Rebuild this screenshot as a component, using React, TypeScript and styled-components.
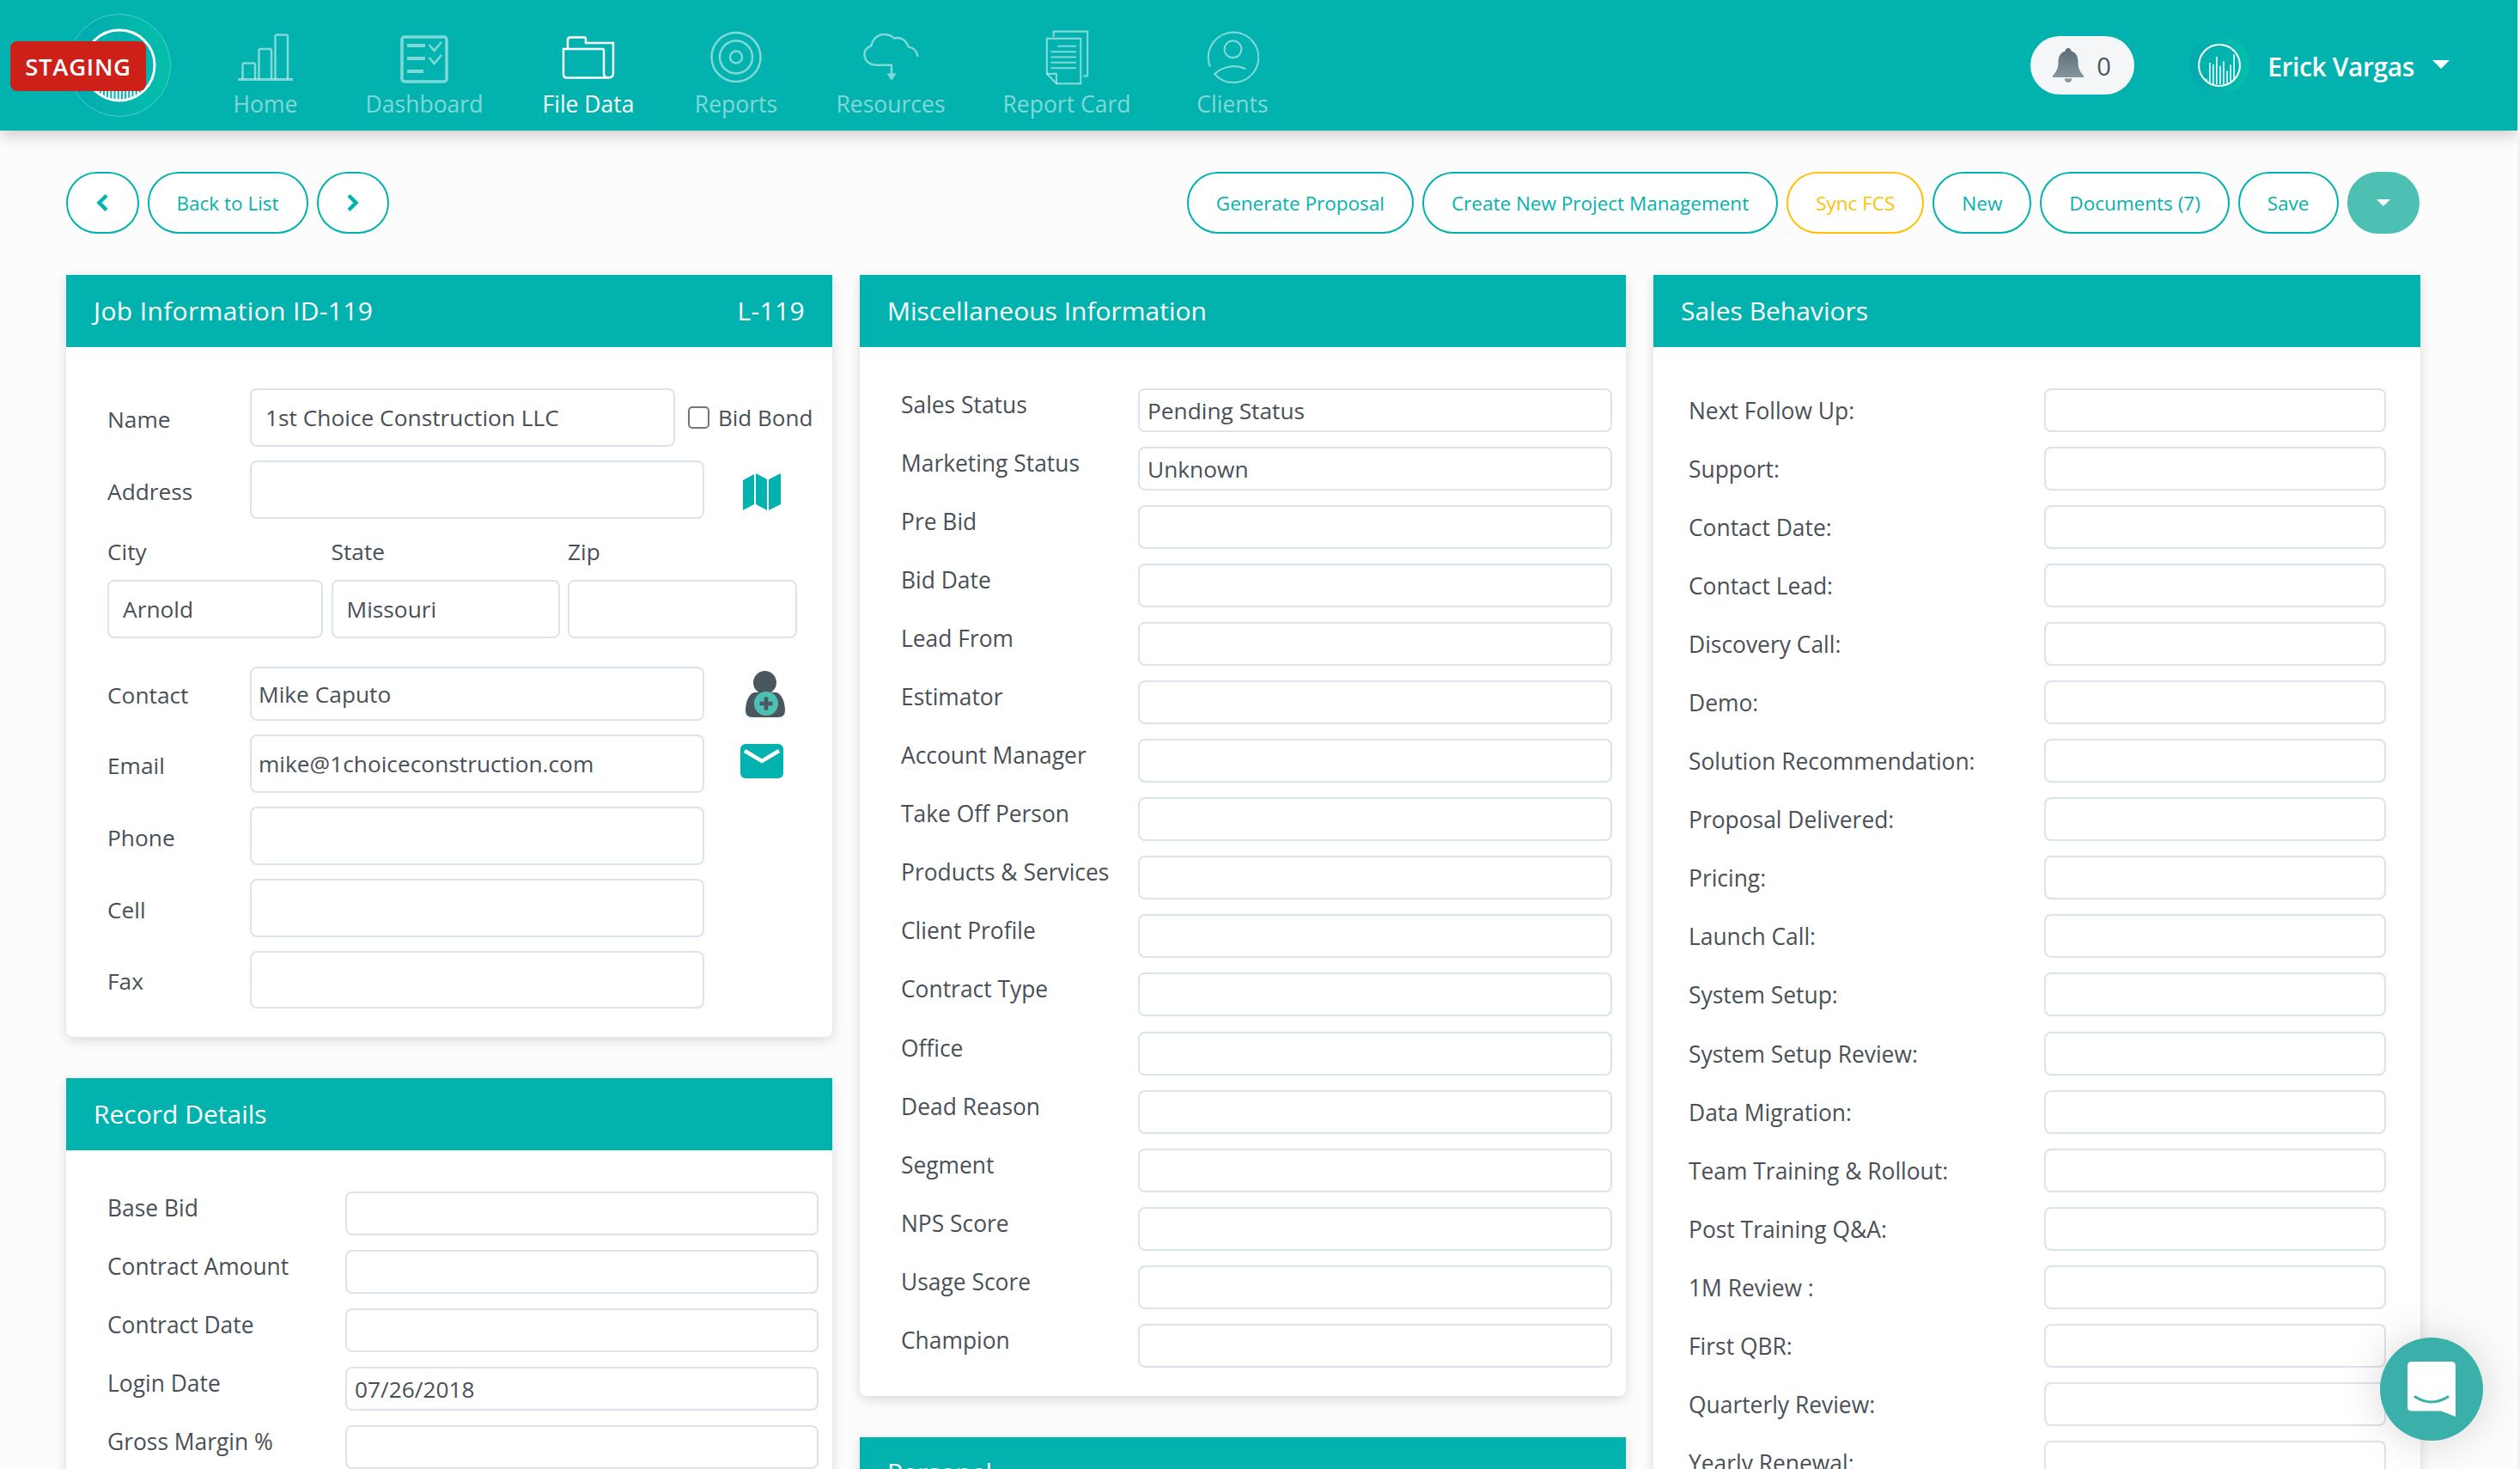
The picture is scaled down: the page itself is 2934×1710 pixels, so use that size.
import React from "react";
import styled, { createGlobalStyle } from "styled-components";

const TEAL = "#02b2af";
const FONT = `"Open Sans", "Noto Sans", sans-serif`;

const Global = createGlobalStyle`
  html, body { margin: 0; padding: 0; height: 100%; overflow: hidden; background: #f3f3f3; }
  body { font-family: ${FONT}; color: #495057; }
  * { box-sizing: border-box; }
`;

const Page = styled.div`
  width: 2931px;
  height: 1710px;
  overflow: hidden;
  background: #fcfcfc;
`;

const Nav = styled.header`
  position: relative;
  z-index: 2;
  height: 152px;
  display: flex;
  align-items: flex-start;
  background: ${TEAL};
  box-shadow: 0 4px 18px rgba(0, 0, 0, 0.22);
`;

const Brand = styled.div`
  position: relative;
  flex: none;
  width: 120px;
  height: 120px;
  margin: 16px 0 0 79px;
`;

const StagingBadge = styled.div`
  position: absolute;
  left: -67px;
  top: 32px;
  width: 158px;
  height: 58px;
  display: flex;
  align-items: center;
  justify-content: center;
  border-radius: 8px;
  background: #cc2019;
  color: #fff;
  font-size: 27.5px;
  font-weight: 600;
  letter-spacing: 0.7px;
`;

const NavList = styled.nav`
  display: flex;
  margin-left: 37px;
  padding-top: 34px;
`;

const NavItem = styled.a<{ $active?: boolean; $w: number }>`
  flex: none;
  width: ${(p) => p.$w}px;
  display: flex;
  flex-direction: column;
  align-items: center;
  color: ${(p) => (p.$active ? "#fff" : "rgba(255,255,255,.5)")};
  font-size: 26.5px;
  line-height: 36px;
  font-weight: ${(p) => (p.$active ? 500 : 400)};
  white-space: nowrap;
`;

const NavIcon = styled.span`
  height: 65px;
  margin-bottom: 4px;
  display: flex;
  align-items: center;
  svg { display: block; }
`;

const NavRight = styled.div`
  margin-left: auto;
  height: 152px;
  display: flex;
  align-items: flex-start;
  padding: 42px 79px 0 0;
`;

const BellPill = styled.div`
  width: 121px;
  height: 68px;
  border-radius: 34px;
  background: #f5f6f8;
  display: flex;
  align-items: center;
  padding-left: 26px;
  gap: 15px;
  color: #4a5560;
  font-size: 29px;
`;

const Avatar = styled.div`
  margin: -1px 0 0 64px;
  width: 70px;
  height: 70px;
  flex: none;
`;

const UserName = styled.span`
  margin: 1px 0 0 21px;
  color: #fff;
  font-size: 30px;
  font-weight: 600;
  line-height: 70px;
  letter-spacing: -0.4px;
  white-space: nowrap;
`;

const UserCaret = styled.span`
  margin: 28px 0 0 21px;
  width: 0;
  height: 0;
  border-left: 10px solid transparent;
  border-right: 10px solid transparent;
  border-top: 10px solid #fff;
`;

const Main = styled.main`
  padding: 48px 0 0 77px;
`;

const Toolbar = styled.div`
  width: 2740px;
  display: flex;
  justify-content: space-between;
  margin-bottom: 48px;
`;

const ButtonGroup = styled.div`
  display: flex;
  gap: 10px;
`;

const PillButton = styled.button<{ $tone?: "teal" | "amber" | "solid"; $square?: boolean }>`
  height: 72px;
  padding: 0 ${(p) => (p.$square ? 0 : 32)}px;
  width: ${(p) => (p.$square ? "84.5px" : "auto")};
  display: flex;
  align-items: center;
  justify-content: center;
  border-radius: 36px;
  border: 2.5px solid ${(p) => (p.$tone === "amber" ? "#ffc107" : p.$tone === "solid" ? "#4dbfb3" : TEAL)};
  background: ${(p) => (p.$tone === "solid" ? "#4dbfb3" : "#fff")};
  color: ${(p) => (p.$tone === "amber" ? "#ffc107" : TEAL)};
  font-family: ${FONT};
  font-size: 22.5px;
  white-space: nowrap;
`;

const SmallCaret = styled.span`
  width: 0;
  height: 0;
  border-left: 8px solid transparent;
  border-right: 8px solid transparent;
  border-top: 8px solid #fff;
`;

const Columns = styled.div`
  display: grid;
  grid-template-columns: 892px 892px 893px;
  column-gap: 32px;
  align-items: start;
`;

const Column = styled.div`
  display: flex;
  flex-direction: column;
  gap: 48px;
`;

const Card = styled.section`
  background: #fff;
  border-radius: 0 0 8px 8px;
  box-shadow: 0 4px 14px rgba(0, 0, 0, 0.14);
`;

const CardHeader = styled.h2`
  margin: 0;
  height: 84px;
  padding: 0 32px 2px;
  display: flex;
  align-items: center;
  justify-content: space-between;
  background: ${TEAL};
  color: #fff;
  font-size: 30px;
  font-weight: 400;
`;

const HeaderId = styled.span`
  letter-spacing: 0.35px;
`;

const CardBody = styled.div<{ $pl: number; $pb: number }>`
  padding: 48px 0 ${(p) => p.$pb}px ${(p) => p.$pl}px;
`;

const JobStack = styled.div`
  display: flex;
  flex-direction: column;
  gap: 16px;
`;

const JobRow = styled.div`
  display: flex;
  align-items: center;
`;

const JobLabel = styled.label`
  flex: none;
  width: 166px;
  font-size: 26.3px;
  line-height: 36px;
  padding-top: 3px;
`;

const TextInput = styled.input<{ $w: number; $h: number; $pad?: number }>`
  flex: none;
  display: block;
  width: ${(p) => p.$w}px;
  height: ${(p) => p.$h}px;
  padding: 0 ${(p) => p.$pad ?? 8}px;
  border: 2px solid #dde3ea;
  border-radius: 8px;
  background: #fff;
  color: #495057;
  font-family: ${FONT};
  font-size: 26.3px;
  outline: none;
`;

const BidBond = styled.label`
  display: flex;
  align-items: center;
  gap: 10px;
  margin-left: 15px;
  font-size: 26px;
  white-space: nowrap;
`;

const BidBox = styled.span`
  width: 25px;
  height: 26px;
  border: 2px solid #767676;
  border-radius: 5px;
  background: #fff;
`;

const IconSlot = styled.span<{ $dy?: number }>`
  flex: none;
  width: 134px;
  margin-top: ${(p) => p.$dy ?? 0}px;
  display: flex;
  justify-content: center;
  svg { display: block; }
`;

const PlaceGrid = styled.div`
  display: grid;
  grid-template-columns: 251px 266px 267px;
  column-gap: 9.5px;
  row-gap: 15px;
  margin: 4px 0 17px;
`;

const PlaceLabel = styled.label`
  font-size: 26.3px;
  line-height: 36px;
`;

const FormList = styled.div`
  display: flex;
  flex-direction: column;
  gap: 17.06px;
`;

const FormRow = styled.div<{ $center?: boolean }>`
  display: flex;
  align-items: ${(p) => (p.$center ? "center" : "flex-start")};
`;

const FormLabel = styled.label<{ $w: number }>`
  flex: none;
  width: ${(p) => p.$w}px;
  padding-top: 1px;
  font-size: 26.4px;
  line-height: 36px;
  white-space: nowrap;
`;

const ChatButton = styled.div`
  position: fixed;
  right: 43px;
  bottom: 33px;
  z-index: 5;
  width: 120px;
  height: 120px;
  border-radius: 50%;
  background: #3bafa9;
  display: flex;
  align-items: center;
  justify-content: center;
  box-shadow: 0 0 50px rgba(0, 0, 0, 0.16);
`;

function Mark({ size, wave }: { size: number; wave?: boolean }) {
  const waveBars = [11, 43, 40, 55, 37, 46, 27, 39, 60];
  const stripes = Array.from({ length: 13 });
  const id = `m${size}`;
  return (
    <svg width={size} height={size} viewBox="0 0 120 120">
      <defs>
        <linearGradient id={`${id}g`} x1="0" x2="1">
          <stop offset="0" stopColor="#03a9b0" />
          <stop offset="1" stopColor="#03bfaa" />
        </linearGradient>
        <clipPath id={`${id}c`}>
          <circle cx="60" cy="60" r="40" />
        </clipPath>
      </defs>
      <circle cx="60" cy="60" r="59.5" fill={`url(#${id}g)`} stroke={wave ? "none" : "rgba(255,255,255,.3)"} strokeWidth="1" />
      <circle cx="60" cy="60" r="41" fill={TEAL} stroke="#fff" strokeWidth={wave ? 3.5 : 3} />
      <g clipPath={`url(#${id}c)`} fill="#fff">
        {wave
          ? waveBars.map((h, i) => <rect key={i} x={34 + i * 6.9 - 1.3} y={98 - h} width="2.6" height={h} />)
          : stripes.map((_, i) => <rect key={i} x={34.5 + i * 4.2} y="80" width="2.2" height="20" />)}
      </g>
    </svg>
  );
}

const ICON = "rgba(255,255,255,.5)";

const HomeIcon = () => (
  <svg width="64" height="55" viewBox="0 0 64 55" fill="none" stroke={ICON} strokeWidth="2.5">
    <path d="M0 53.5H64" strokeWidth="3" />
    <path d="M5.5 53V36.5Q5.5 34.5 7.5 34.5H18Q20 34.5 20 36.5V53" />
    <path d="M24.5 53V20Q24.5 18 26.5 18H37Q39 18 39 20V53" />
    <path d="M43.5 53V3.5Q43.5 1.5 45.5 1.5H56Q58 1.5 58 3.5V53" />
  </svg>
);
const DashboardIcon = () => (
  <svg width="56" height="61" viewBox="0 -5 56 61" fill="none" stroke={ICON} strokeWidth="3.5">
    <rect x="2" y="2" width="52" height="52" rx="3" />
    <path d="M8 12H29M8 27H29M8 42H27" strokeWidth="4" />
    <path d="M33.5 11L39.5 18L48 8M33.5 26L39.5 33L48 23" strokeWidth="2.5" />
  </svg>
);
const FolderIcon = () => (
  <svg width="62" height="50" viewBox="0 0 62 50" fill="none" stroke="#fff" strokeWidth="2.5">
    <path d="M2 15H47Q49 15 49 17V43Q49 48.5 54 48.5H6Q2 48.5 2 44.5Z" />
    <path d="M7 15V4.5Q7 1.5 10 1.5H26Q28 1.5 28 3.5V8H60V43Q60 48.5 54 48.5" />
  </svg>
);
const ReportsIcon = () => (
  <svg width="60" height="61" viewBox="0 0 60 61" fill="none" stroke={ICON} strokeWidth="2.5">
    <circle cx="30" cy="30.5" r="28.5" />
    <circle cx="30" cy="30.5" r="19" />
    <circle cx="30" cy="30.5" r="7" />
  </svg>
);
const CloudIcon = () => (
  <svg width="65" height="55" viewBox="12 115 197 168" fill="none" stroke={ICON} strokeWidth="7.5">
    <path d="M205 197C203 178 190 165 172 162C165 140 145 125 122 132C105 115 75 112 55 130C45 140 42 150 40 158C22 165 14 178 16 195C20 215 35 225 55 227H112V258" />
    <path d="M95 257H130L112 282Z" fill={ICON} stroke="none" />
  </svg>
);
const ReportCardIcon = () => (
  <svg width="51" height="64" viewBox="653 100 154 195" fill="none" stroke={ICON} strokeWidth="6.5">
    <path d="M682 125V105H802V263H787" />
    <path d="M658 130H778V290H692L658 255Z" />
    <path d="M658 255H692V290" />
    <path d="M696 157H762M672 177H762M672 196H762M672 215H762M672 235H762" />
  </svg>
);
const ClientsIcon = () => (
  <svg width="61" height="61" viewBox="1212 105 186 186" fill="none" stroke={ICON} strokeWidth="6.5">
    <path d="M1224 232A89 89 0 1 1 1240 258C1262 235 1310 220 1350 240" />
    <circle cx="1305" cy="170" r="30" />
  </svg>
);
const BellIcon = () => (
  <svg width="36" height="40" viewBox="0 0 36 40">
    <defs>
      <linearGradient id="bell" x1="0" x2="0" y1="0" y2="1">
        <stop offset="0" stopColor="#5d6b78" />
        <stop offset="1" stopColor="#8b9da3" />
      </linearGradient>
    </defs>
    <path
      fill="url(#bell)"
      d="M18 0C20 0 21.5 1.5 21.5 3.5C27 5 29.5 10 29.5 16C29.5 24 32 28 36 32V34H0V32C4 28 6.5 24 6.5 16C6.5 10 9 5 14.5 3.5C14.5 1.5 16 0 18 0ZM13.5 35.5H22.5C22 38.5 20 40 18 40C16 40 14 38.5 13.5 35.5Z"
    />
  </svg>
);
const MapIcon = () => (
  <svg width="44" height="43" viewBox="0 0 44 43" fill={TEAL}>
    <path d="M0 8L13 1V36L0 43Z" />
    <path d="M15 0L28 7V43L15 36Z" />
    <path d="M30 7L44 0V36L30 43Z" />
  </svg>
);
const PersonIcon = () => (
  <svg width="54" height="54" viewBox="0 0 54 54">
    <circle cx="30.5" cy="13.5" r="13.5" fill="#4a575e" />
    <path d="M18 25C11 27 8 38 8 46Q8 54 16 54H46Q54 54 54 46C54 38 51 27 44 25Z" fill="#4a575e" />
    <circle cx="32" cy="38" r="14" fill="#4dbfb3" />
    <path d="M32 30.5V45.5M24.5 38H39.5" stroke="#4a575e" strokeWidth="4.5" />
  </svg>
);
const MailIcon = () => (
  <svg width="50" height="40" viewBox="0 0 50 40">
    <rect width="50" height="40" rx="6" fill={TEAL} />
    <path d="M5 8L25 20L45 8" fill="none" stroke="#fff" strokeWidth="4.5" />
  </svg>
);
const ChevronIcon = ({ right }: { right?: boolean }) => (
  <svg width="15" height="22" viewBox="0 0 15 22" fill="none" stroke={TEAL} strokeWidth="4.5">
    <path d={right ? "M3 2.5L11.5 11L3 19.5" : "M12 2.5L3.5 11L12 19.5"} />
  </svg>
);
const ChatIcon = () => (
  <svg width="56" height="64" viewBox="0 0 56 64">
    <path d="M5 0H51Q56 0 56 5V64L39 57.5H5Q0 57.5 0 52.5V5Q0 0 5 0Z" fill="#fff" />
    <path d="M9 41Q28 53 47 41" fill="none" stroke="#3bafa9" strokeWidth="3" strokeLinecap="round" />
  </svg>
);

const NAV = [
  { label: "Home", w: 146, icon: <HomeIcon /> },
  { label: "Dashboard", w: 224, icon: <DashboardIcon /> },
  { label: "File Data", w: 158, icon: <FolderIcon />, active: true },
  { label: "Reports", w: 186, icon: <ReportsIcon /> },
  { label: "Resources", w: 174, icon: <CloudIcon /> },
  { label: "Report Card", w: 236, icon: <ReportCardIcon /> },
  { label: "Clients", w: 150, icon: <ClientsIcon /> },
];

const MISC: [string, string][] = [
  ["Sales Status", "Pending Status"],
  ["Marketing Status", "Unknown"],
  ["Pre Bid", ""],
  ["Bid Date", ""],
  ["Lead From", ""],
  ["Estimator", ""],
  ["Account Manager", ""],
  ["Take Off Person", ""],
  ["Products & Services", ""],
  ["Client Profile", ""],
  ["Contract Type", ""],
  ["Office", ""],
  ["Dead Reason", ""],
  ["Segment", ""],
  ["NPS Score", ""],
  ["Usage Score", ""],
  ["Champion", ""],
];

const SALES = [
  "Next Follow Up:",
  "Support:",
  "Contact Date:",
  "Contact Lead:",
  "Discovery Call:",
  "Demo:",
  "Solution Recommendation:",
  "Proposal Delivered:",
  "Pricing:",
  "Launch Call:",
  "System Setup:",
  "System Setup Review:",
  "Data Migration:",
  "Team Training & Rollout:",
  "Post Training Q&A:",
  "1M Review :",
  "First QBR:",
  "Quarterly Review:",
  "Yearly Renewal:",
];

const RECORD: [string, string][] = [
  ["Base Bid", ""],
  ["Contract Amount", ""],
  ["Contract Date", ""],
  ["Login Date", "07/26/2018"],
  ["Gross Margin %", ""],
];

export default function App() {
  return (
    <Page>
      <Global />
      <Nav>
        <Brand>
          <Mark size={120} />
          <StagingBadge>STAGING</StagingBadge>
        </Brand>
        <NavList>
          {NAV.map((n) => (
            <NavItem key={n.label} $active={n.active} $w={n.w}>
              <NavIcon>{n.icon}</NavIcon>
              {n.label}
            </NavItem>
          ))}
        </NavList>
        <NavRight>
          <BellPill>
            <BellIcon />0
          </BellPill>
          <Avatar>
            <Mark size={70} wave />
          </Avatar>
          <UserName>Erick Vargas</UserName>
          <UserCaret />
        </NavRight>
      </Nav>
      <Main>
        <Toolbar>
          <ButtonGroup>
            <PillButton $square>
              <ChevronIcon />
            </PillButton>
            <PillButton>Back to List</PillButton>
            <PillButton $square>
              <ChevronIcon right />
            </PillButton>
          </ButtonGroup>
          <ButtonGroup>
            <PillButton>Generate Proposal</PillButton>
            <PillButton>Create New Project Management</PillButton>
            <PillButton $tone="amber">Sync FCS</PillButton>
            <PillButton>New</PillButton>
            <PillButton>Documents (7)</PillButton>
            <PillButton>Save</PillButton>
            <PillButton $square $tone="solid">
              <SmallCaret />
            </PillButton>
          </ButtonGroup>
        </Toolbar>
        <Columns>
          <Column>
            <Card>
              <CardHeader>
                <HeaderId>Job Information ID-119</HeaderId>
                <HeaderId>L-119</HeaderId>
              </CardHeader>
              <CardBody $pl={48} $pb={33}>
                <JobStack>
                  <JobRow>
                    <JobLabel>Name</JobLabel>
                    <TextInput $w={495} $h={68} $pad={16} readOnly value="1st Choice Construction LLC" />
                    <BidBond>
                      <BidBox />
                      Bid Bond
                    </BidBond>
                  </JobRow>
                  <JobRow>
                    <JobLabel>Address</JobLabel>
                    <TextInput $w={529} $h={68} readOnly value="" />
                    <IconSlot $dy={5}>
                      <MapIcon />
                    </IconSlot>
                  </JobRow>
                  <PlaceGrid>
                    <PlaceLabel>City</PlaceLabel>
                    <PlaceLabel>State</PlaceLabel>
                    <PlaceLabel>Zip</PlaceLabel>
                    <TextInput $w={251} $h={68} $pad={16} readOnly value="Arnold" />
                    <TextInput $w={266} $h={68} $pad={16} readOnly value="Missouri" />
                    <TextInput $w={267} $h={68} readOnly value="" />
                  </PlaceGrid>
                  <JobRow>
                    <JobLabel>Contact</JobLabel>
                    <TextInput $w={529} $h={63} readOnly value="Mike Caputo" />
                    <IconSlot>
                      <PersonIcon />
                    </IconSlot>
                  </JobRow>
                  <JobRow>
                    <JobLabel>Email</JobLabel>
                    <TextInput $w={529} $h={68} readOnly value="mike@1choiceconstruction.com" />
                    <IconSlot $dy={-6}>
                      <MailIcon />
                    </IconSlot>
                  </JobRow>
                  <JobRow>
                    <JobLabel>Phone</JobLabel>
                    <TextInput $w={529} $h={68} readOnly value="" />
                  </JobRow>
                  <JobRow>
                    <JobLabel>Cell</JobLabel>
                    <TextInput $w={529} $h={68} readOnly value="" />
                  </JobRow>
                  <JobRow>
                    <JobLabel>Fax</JobLabel>
                    <TextInput $w={529} $h={67} readOnly value="" />
                  </JobRow>
                </JobStack>
              </CardBody>
            </Card>
            <Card>
              <CardHeader>Record Details</CardHeader>
              <CardBody $pl={48} $pb={48}>
                <FormList>
                  {RECORD.map(([l, v]) => (
                    <FormRow key={l}>
                      <FormLabel $w={277}>{l}</FormLabel>
                      <TextInput $w={551} $h={51} $pad={9} readOnly value={v} />
                    </FormRow>
                  ))}
                </FormList>
              </CardBody>
            </Card>
          </Column>
          <Column>
            <Card>
              <CardHeader>Miscellaneous Information</CardHeader>
              <CardBody $pl={48} $pb={33}>
                <FormList>
                  {MISC.map(([l, v]) => (
                    <FormRow key={l}>
                      <FormLabel $w={276}>{l}</FormLabel>
                      <TextInput $w={552} $h={51} $pad={9} readOnly value={v} />
                    </FormRow>
                  ))}
                </FormList>
              </CardBody>
            </Card>
            <Card>
              <CardHeader>Personal</CardHeader>
              <CardBody $pl={48} $pb={48} />
            </Card>
          </Column>
          <Column>
            <Card>
              <CardHeader>Sales Behaviors</CardHeader>
              <CardBody $pl={41} $pb={33}>
                <FormList>
                  {SALES.map((l) => (
                    <FormRow key={l} $center>
                      <FormLabel $w={414}>{l}</FormLabel>
                      <TextInput $w={398} $h={51} readOnly value="" />
                    </FormRow>
                  ))}
                </FormList>
              </CardBody>
            </Card>
          </Column>
        </Columns>
      </Main>
      <ChatButton>
        <ChatIcon />
      </ChatButton>
    </Page>
  );
}
